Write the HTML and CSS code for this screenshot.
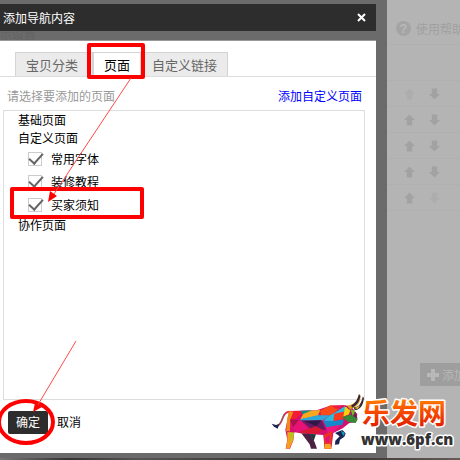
FILE: index.html
```html
<!DOCTYPE html>
<html lang="zh-CN">
<head>
<meta charset="UTF-8">
<title>添加导航内容</title>
<link rel="stylesheet" href="styles.css">
</head>
<body>

<svg class="defs" aria-hidden="true">
    <symbol id="arrow-up" viewBox="0 0 12 12"><path d="M6 0L12 6H9V12H3V6H0Z"/></symbol>
    <symbol id="arrow-down" viewBox="0 0 12 12"><path d="M6 12L0 6H3V0H9V6H12Z"/></symbol>
</svg>

<div class="screen">
    <main class="dialog">
        <header class="dialog-head">
            <h1>添加导航内容</h1>
            <button class="close" type="button" aria-label="关闭">
                <svg viewBox="0 0 9 9"><path d="M1 1L8 8M8 1L1 8"/></svg>
            </button>
        </header>
        <div class="backdrop"><span>示设置</span></div>

        <div class="panel">
            <nav class="tabs">
                <button class="tab" type="button">宝贝分类</button>
                <button class="tab active" type="button">页面</button>
                <button class="tab" type="button">自定义链接</button>
            </nav>
            <div class="hint">
                <span>请选择要添加的页面</span>
                <a href="#">添加自定义页面</a>
            </div>
            <div class="tree">
                <p>基础页面</p>
                <p>自定义页面</p>
                <label class="check"><input type="checkbox" checked>常用字体</label>
                <label class="check"><input type="checkbox" checked>装修教程</label>
                <label class="check"><input type="checkbox" checked>买家须知</label>
                <p>协作页面</p>
            </div>
            <footer class="actions">
                <button class="ok" type="button">确定</button>
                <button class="cancel" type="button">取消</button>
            </footer>
        </div>
    </main>

    <aside class="side">
        <div class="help"><span class="help-icon">?</span>使用帮助</div>
        <div class="spacer"></div>
        <div class="order"><svg class="off"><use href="#arrow-up"/></svg><svg><use href="#arrow-down"/></svg></div>
        <div class="order"><svg><use href="#arrow-up"/></svg><svg><use href="#arrow-down"/></svg></div>
        <div class="order"><svg><use href="#arrow-up"/></svg><svg><use href="#arrow-down"/></svg></div>
        <div class="order"><svg><use href="#arrow-up"/></svg><svg><use href="#arrow-down"/></svg></div>
        <div class="order"><svg><use href="#arrow-up"/></svg><svg class="off"><use href="#arrow-down"/></svg></div>
        <div class="side-foot">
            <button class="add" type="button">
                <svg viewBox="0 0 12 12"><path d="M4 0H8V4H12V8H8V12H4V8H0V4H4Z"/></svg>添加
            </button>
        </div>
    </aside>
</div>
<div class="strip"></div>

<!-- red markers over the dialog -->
<svg class="marks" viewBox="0 0 460 460" aria-hidden="true">
    <g fill="none" stroke="#f00" stroke-width="4" stroke-linejoin="round">
        <rect x="89" y="45" width="54" height="32"/>
        <rect x="12" y="189" width="130" height="28"/>
        <ellipse cx="26" cy="422" rx="27" ry="21"/>
    </g>
    <path d="M131 78L52 197M76 341L36 408" stroke="#ff4a4a" fill="none"/>
    <path d="M48 202L50 191L57 196ZM33 412L35 403L42 407Z" fill="#f00"/>
</svg>

<svg class="logo" viewBox="0 0 190 70" role="img" aria-label="乐发网 www.6pf.cn">
    <defs>
        <linearGradient id="fire" x1="0" y1="0" x2="0" y2="1">
            <stop offset="0.2" stop-color="#ff7a00"/>
            <stop offset="0.5" stop-color="#f64a00"/>
            <stop offset="1" stop-color="#d90e00"/>
        </linearGradient>
    </defs>
    <!-- bull -->
    <g transform="scale(.3333) translate(0 -31)">
        <path d="M66 97C48 92 42 104 38 116C34 128 28 139 18 140" fill="none" stroke="#e0284a" stroke-width="5"/>
        <path d="M42 103C36 116 34 128 24 137" fill="none" stroke="#2c8a78" stroke-width="2"/>
        <path d="M5 132L18 136L28 133L23 147L12 141Z" fill="#1c2450"/>
        <path d="M58 94L140 92L180 78L225 77L245 82L262 104L258 128L238 130L218 146L190 160L184 207H164L160 166L105 162L73 158L70 182L60 207H47L52 180L46 150Z" fill="#d3106f"/>
        <path d="M58 94L104 94L76 119L57 123Z" fill="#f21c35"/>
        <path d="M57 94L70 96L61 120L60 155L48 155L52 115Z" fill="#f08a18"/>
        <path d="M104 94L151 91L144 108L91 119Z" fill="#f7a81c"/>
        <path d="M92 93L126 92L98 104Z" fill="#158b88"/>
        <path d="M150 93L181 77L216 80L184 105L154 110Z" fill="#fa4b17"/>
        <path d="M184 79L225 76L202 88Z" fill="#ed1949"/>
        <path d="M90 119L143 107L182 107L154 124L96 127Z" fill="#2da8d8"/>
        <path d="M92 122L155 122L168 151L120 146Z" fill="#681b64"/>
        <path d="M104 125L154 122L139 140Z" fill="#321647"/>
        <path d="M62 119L90 120L116 147L80 157L61 143Z" fill="#e61276"/>
        <path d="M60 119L87 121L69 143Z" fill="#ab124b"/>
        <path d="M116 147L139 140L158 151L142 163L84 160Z" fill="#d91832"/>
        <path d="M182 106L225 80L226 100L190 124L159 123Z" fill="#28bce1"/>
        <path d="M160 124L193 124L222 119L217 136L170 145Z" fill="#1687c9"/>
        <path d="M168 143L214 135L187 160L178 178Z" fill="#ed1680"/>
        <path d="M193 102L225 95L219 119L190 123Z" fill="#f43b1f"/>
        <path d="M225 82L244 82L237 104L220 111Z" fill="#f4d20b"/>
        <path d="M216 112L245 104L263 119L257 130L235 127Z" fill="#388936"/>
        <path d="M241 87L258 99L263 118L244 106Z" fill="#6a2550"/>
        <path d="M241 88L256 94L248 110Z" fill="#78b829"/>
        <path d="M225 78L246 81L238 91Z" fill="#c21563"/>
        <path d="M229 77C249 79 263 65 267 44L272 48C272 71 256 88 239 87Z" fill="#df9e1c"/>
        <path d="M244 77C258 71 263 57 267 43L271 49C268 66 260 78 246 84Z" fill="#382236"/>
        <path d="M251 83C267 82 274 72 278 51L282 54C280 78 269 91 254 91Z" fill="#332737"/>
        <path d="M254 86L271 77L263 88Z" fill="#e6bf21"/>
        <path d="M94 161L121 163L134 188L141 207H123L119 194Z" fill="#4b2143"/>
        <path d="M120 163L138 164L131 184Z" fill="#173b3f"/>
        <path d="M52 157L72 159L70 181L58 207H48L52 183Z" fill="#f7a11a"/>
        <path d="M59 158L72 159L64 190Z" fill="#a9c91d"/>
        <path d="M161 165L187 154L183 207H164Z" fill="#ec3320"/>
        <path d="M163 177L179 165L177 196Z" fill="#e5127b"/>
        <path d="M164 193L181 192L184 207H164Z" fill="#f6a81e"/>
        <path d="M195 160L217 151L227 161L223 171L210 180L207 194L195 195L196 183L209 170Z" fill="#1c2355"/>
        <path d="M212 153L225 159L220 169Z" fill="#1c9cbd"/>
    </g>
    <text class="brand" x="92" y="34">乐发网</text>
    <text class="url" x="91" y="55">www.6pf.cn</text>
</svg>

</body>
</html>
```
FILE: styles.css
```css
*{box-sizing:border-box;margin:0}
body{
    display:flex;flex-direction:column;
    min-height:100vh;overflow:hidden;
    font:12px/18px "Noto Sans CJK SC",sans-serif;
    color:#000;background:#6b6b6b;
}
button{font:inherit;border:0;padding:0;background:none;color:inherit;cursor:pointer}
.defs{position:absolute;width:0;height:0}

.screen{flex:1;display:flex}
.strip{height:2px;background:linear-gradient(90deg,#777,#333 15%,#555 30%,#302c2a 70%,#665d57)}

/* ─── Dialog ─────────────────────────────────────────────────── */
.dialog{
    flex:1;display:flex;flex-direction:column;
    padding:4px 11px 5px 0;
}
.dialog-head{
    display:flex;justify-content:space-between;align-items:center;
    height:27px;padding:0 10px 0 3px;
    background:#2d2d2d;color:#fff;
}
.dialog-head h1{font-size:12px;font-weight:400}
.close{display:flex}
.close svg{width:9px;height:9px;fill:none;stroke:#fff;stroke-width:2}
.backdrop{height:9px;overflow:hidden;color:#646464;line-height:6px}

.panel{
    flex:1;display:flex;flex-direction:column;
    padding-top:11px;background:#fff;border-top:1px solid #999;
}

.tabs{display:flex;height:25px;padding-left:15px;border-bottom:1px solid #ddd}
.tab{
    padding:0 10px;font-size:13px;
    color:#666;background:#ebebeb;border:1px solid #d4d4d4;border-bottom:0;
}
.tab:first-child{padding-right:14px}
.tab.active{height:25px;color:#000;background:#fff}

.hint{
    display:flex;justify-content:space-between;align-items:center;
    height:33px;padding:4px 14px 0 7px;color:#999;
}
.hint a{color:#00f;text-decoration:none}

.tree{
    flex:1;margin:0 11px 0 3px;padding:0 14px;
    border:1px solid #ddd;
}
.check{display:flex;align-items:center;gap:9px;height:23px;padding-left:10px}
.check input{
    appearance:none;width:14px;height:14px;margin:0;
    border:1px solid #ccc;background:#fff;
    display:grid;place-items:center;
}
.check input:checked::before{
    content:"";width:12px;height:6px;margin-bottom:4px;
    border:solid #666;border-width:0 0 2px 2px;transform:rotate(-48deg);
}

.actions{display:flex;align-items:center;gap:9px;height:53px;padding:0 8px 9px}
.ok{width:40px;height:23px;background:#2d2d2d;color:#fff;border-radius:2px}

/* ─── Dimmed page on the right ───────────────────────────────── */
.side{
    flex:0 0 73px;display:flex;flex-direction:column;overflow:hidden;
    background:#b4b4b4;color:#a0a0a0;white-space:nowrap;
}
.help{
    display:flex;align-items:center;gap:5px;
    height:45px;padding:13px 0 0 9px;border-bottom:1px solid #b0b0b0;
}
.help-icon{
    flex:none;width:15px;height:15px;border-radius:50%;
    background:#a4a4a4;color:#b8b8b8;
    font:bold 13px/15px "Liberation Sans",sans-serif;text-align:center;
}
.spacer{height:36px;border-bottom:1px solid #b0b0b0}
.order{
    display:flex;align-items:center;gap:14px;
    height:26px;padding-left:17px;border-bottom:1px solid #b0b0b0;
}
.order svg{width:11px;height:12px;fill:#a2a2a2}
.order .off{fill:#adadad}
.side-foot{
    flex:1;display:flex;align-items:flex-end;
    padding:0 0 72px 33px;
}
.add{
    display:flex;flex:none;align-items:center;gap:3px;
    height:23px;padding:0 7px;background:#9e9e9e;color:#b6b6b6;
}
.add svg{width:12px;height:12px;fill:#b8b8b8}

/* ─── Overlays ───────────────────────────────────────────────── */
.marks{position:absolute;left:0;top:0;width:460px;height:460px;pointer-events:none}
.logo{position:absolute;right:0;bottom:0;width:190px;height:70px;pointer-events:none}
.brand,.url{paint-order:stroke;stroke:#fff;stroke-width:3px;stroke-linejoin:round}
.brand{font:700 28px "Noto Sans CJK SC",sans-serif;fill:url(#fire)}
.url{font:800 15px "Open Sans",sans-serif;fill:#333}
```
